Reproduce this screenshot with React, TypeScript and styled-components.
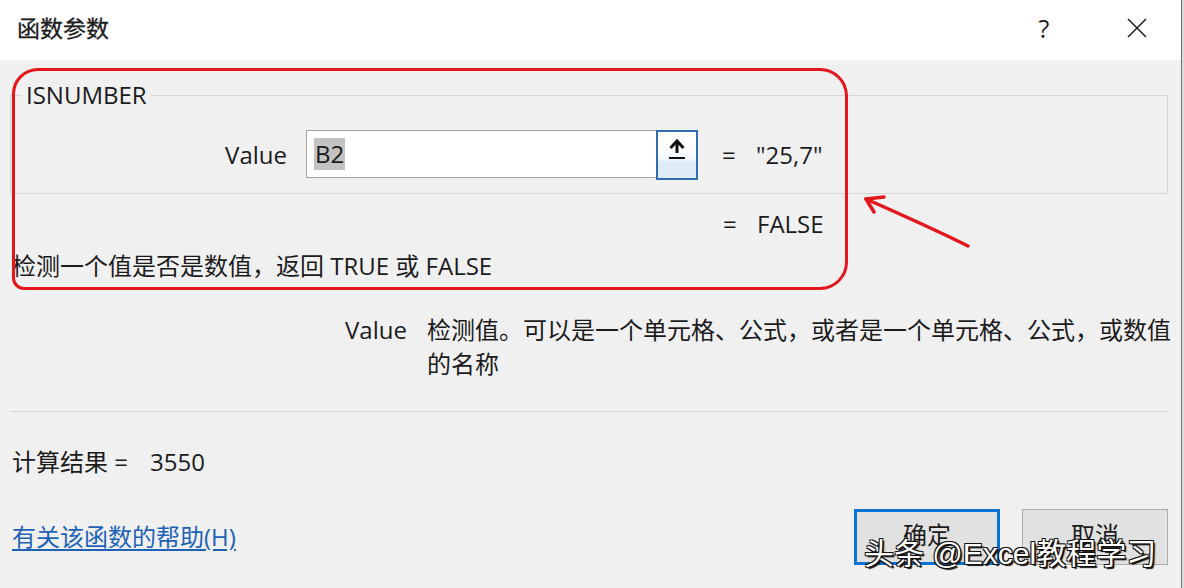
import styled, { createGlobalStyle } from 'styled-components';

const GlobalStyle = createGlobalStyle`
  html, body {
    margin: 0;
    padding: 0;
    background: #e6e6e6;
  }
  body {
    font-family: "Open Sans", "Noto Sans CJK SC", sans-serif;
    color: #1b1b1b;
  }
`;

const argHelp = '检测值。可以是一个单元格、公式，或者是一个单元格、公式，或数值的名称';

const App = () => {
    return (
        <>
            <GlobalStyle />
            <Screen>
                <Dialog>
                    <TitleBar>
                        <Title>函数参数</Title>
                        <TitleTools>
                            <HelpMark>?</HelpMark>
                            <CloseButton>
                                <svg width="22" height="22" viewBox="0 0 22 22">
                                    <path d="M2 2 L20 20 M20 2 L2 20" stroke="#222" strokeWidth="1.6" fill="none" />
                                </svg>
                            </CloseButton>
                        </TitleTools>
                    </TitleBar>

                    <Body>
                        <Group>
                            <Legend>ISNUMBER</Legend>
                            <ArgRow>
                                <ArgLabel>Value</ArgLabel>
                                <RefBox>
                                    <RefField>
                                        <Selected>B2</Selected>
                                    </RefField>
                                    <CollapseButton>
                                        <svg width="18" height="22" viewBox="0 0 18 22">
                                            <path d="M9 3 L9 15" stroke="#111" strokeWidth="3" fill="none" />
                                            <path d="M2.5 10 L9 3 L15.5 10" stroke="#111" strokeWidth="3" fill="none" strokeLinejoin="miter" />
                                            <path d="M1 20 L17 20" stroke="#111" strokeWidth="2" />
                                        </svg>
                                    </CollapseButton>
                                </RefBox>
                                <Equals>=</Equals>
                                <ArgValue>"25,7"</ArgValue>
                            </ArgRow>
                        </Group>

                        <ResultRow>
                            <Equals>=</Equals>
                            <ArgValue>FALSE</ArgValue>
                        </ResultRow>

                        <FuncDesc>检测一个值是否是数值，返回 TRUE 或 FALSE</FuncDesc>

                        <ArgHelp>
                            <ArgHelpName>Value</ArgHelpName>
                            <ArgHelpText>{argHelp}</ArgHelpText>
                        </ArgHelp>

                        <Divider />

                        <CalcResult>
                            计算结果 =<CalcValue>3550</CalcValue>
                        </CalcResult>

                        <Footer>
                            <HelpLink href="#">有关该函数的帮助(H)</HelpLink>
                            <Buttons>
                                <DialogButton $primary>确定</DialogButton>
                                <DialogButton>取消</DialogButton>
                            </Buttons>
                        </Footer>
                    </Body>

                    <Highlight />
                    <Arrow width="120" height="64" viewBox="0 0 120 64">
                        <path
                            d="M108 56 C 80 42, 40 24, 6 9"
                            stroke="#e3161b"
                            strokeWidth="3.5"
                            fill="none"
                            strokeLinecap="round"
                        />
                        <path
                            d="M24 7 L6 9 L14 22"
                            stroke="#e3161b"
                            strokeWidth="3.5"
                            fill="none"
                            strokeLinecap="round"
                            strokeLinejoin="round"
                        />
                    </Arrow>
                    <Watermark>头条 @Excel教程学习</Watermark>
                </Dialog>
            </Screen>
        </>
    );
};

export default App;

const Screen = styled.div`
  width: 1184px;
  height: 588px;
  overflow: hidden;
  background: #dcdcdc;
`;

const Dialog = styled.div`
  position: relative;
  width: 1181px;
  height: 588px;
  overflow: hidden;
  background: #f0f0f1;
  border-right: 1px solid #6e6e6e;
`;

const TitleBar = styled.div`
  height: 60px;
  display: flex;
  align-items: center;
  justify-content: space-between;
  padding: 0 0 0 17px;
  background: #ffffff;
`;

const Title = styled.div`
  font-size: 23px;
  line-height: 30px;
  margin-top: -4px;
  -webkit-text-stroke: 0.3px #1b1b1b;
`;

const TitleTools = styled.div`
  display: flex;
  align-items: center;
  margin-top: -4px;
`;

const HelpMark = styled.div`
  width: 20px;
  font-size: 25px;
  line-height: 30px;
  text-align: center;
  color: #222;
`;

const CloseButton = styled.div`
  display: flex;
  align-items: center;
  justify-content: center;
  margin: 0 33px 0 72px;
`;

const Body = styled.div`
  display: flex;
  flex-direction: column;
  padding: 0 13px 0 10px;
  font-size: 24px;
`;

const Group = styled.fieldset`
  margin: 20px 0 0 0;
  padding: 20px 0 13px 0;
  width: 1158px;
  box-sizing: border-box;
  border: 1px solid #d6d6d8;
  min-inline-size: 0;
`;

const Legend = styled.legend`
  margin-left: 11px;
  padding: 0 4px;
  font-size: 24px;
  line-height: 30px;
`;

const ArgRow = styled.div`
  display: flex;
  align-items: center;
  height: 50px;
`;

const ArgLabel = styled.div`
  width: 276px;
  margin-right: 19px;
  text-align: right;
  line-height: 30px;
`;

const RefBox = styled.div`
  display: flex;
  height: 50px;
  margin-right: 24px;
`;

const RefField = styled.div`
  width: 350px;
  height: 48px;
  display: flex;
  align-items: center;
  padding-left: 7px;
  box-sizing: border-box;
  background: #ffffff;
  border: 1px solid #a3a3a3;
  border-right: none;
`;

const Selected = styled.span`
  background: #c3c3c3;
  line-height: 32px;
  padding: 0 1px;
`;

const CollapseButton = styled.div`
  width: 42px;
  height: 50px;
  box-sizing: border-box;
  border: 2px solid #2f6db3;
  display: flex;
  justify-content: center;
  padding-top: 6px;
  background: linear-gradient(#ffffff 0%, #f8fbfe 55%, #dfecf8 66%, #dfecf8 100%);
`;

const Equals = styled.span`
  width: 34px;
  line-height: 30px;
`;

const ArgValue = styled.span`
  line-height: 30px;
`;

const ResultRow = styled.div`
  display: flex;
  margin-top: 15px;
  padding-left: 713px;
  height: 30px;
`;

const FuncDesc = styled.div`
  margin-top: 12px;
  padding-left: 2px;
  line-height: 30px;
`;

const ArgHelp = styled.div`
  display: flex;
  margin-top: 32px;
  padding-left: 335px;
  line-height: 34px;
`;

const ArgHelpName = styled.div`
  width: 82px;
  flex-shrink: 0;
`;

const ArgHelpText = styled.div`
  width: 758px;
  flex-shrink: 0;
`;

const Divider = styled.div`
  width: 1158px;
  height: 1px;
  margin-top: 30px;
  background: #d6d6d8;
`;

const CalcResult = styled.div`
  margin-top: 35px;
  padding-left: 2px;
  line-height: 30px;
`;

const CalcValue = styled.span`
  margin-left: 22px;
`;

const Footer = styled.div`
  margin-top: 32px;
  display: flex;
  align-items: center;
  justify-content: space-between;
`;

const HelpLink = styled.a`
  padding-left: 2px;
  color: #1e62b6;
  line-height: 30px;
  text-decoration: underline;
  text-underline-offset: 3px;
`;

const Buttons = styled.div`
  display: flex;
  gap: 22px;
`;

const DialogButton = styled.button<{ $primary?: boolean }>`
  width: 146px;
  height: 56px;
  font-family: inherit;
  font-size: 24px;
  color: #1b1b1b;
  background: #e1e1e1;
  border: ${({ $primary }) => ($primary ? '3px solid #0a74d4' : '1px solid #adadad')};
  padding: 0 0 8px 0;
`;

const Highlight = styled.div`
  position: absolute;
  left: 12px;
  top: 68px;
  width: 836px;
  height: 222px;
  box-sizing: border-box;
  border: 3px solid #e3161b;
  border-radius: 26px 28px 28px 12px;
  pointer-events: none;
`;

const Arrow = styled.svg`
  position: absolute;
  left: 860px;
  top: 190px;
`;

const Watermark = styled.div`
  position: absolute;
  left: 864px;
  top: 535px;
  font-family: "Liberation Sans", "Noto Sans CJK SC", sans-serif;
  font-size: 30px;
  line-height: 38px;
  color: #ffffff;
  white-space: nowrap;
  text-shadow:
    1px 1px 0 #111, -1px -1px 0 #111, 1px -1px 0 #111, -1px 1px 0 #111,
    2px 2px 1px #111;
`;
